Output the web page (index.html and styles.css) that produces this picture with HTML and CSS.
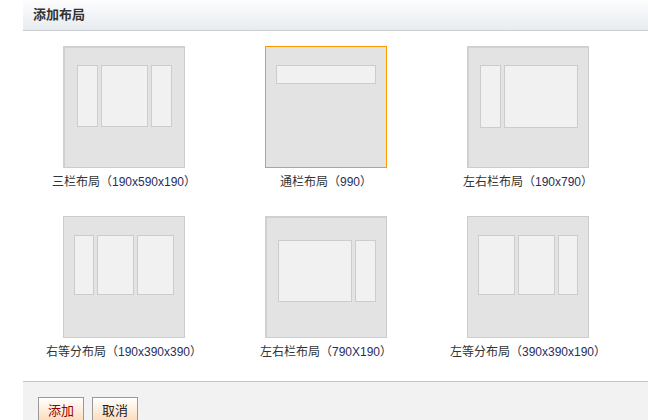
FILE: index.html
```html
<!DOCTYPE html>
<html lang="zh-CN">
<head>
<meta charset="utf-8">
<title>添加布局</title>
<link rel="stylesheet" href="styles.css">
</head>
<body>
<div class="dialog">
  <div class="dlg-head">添加布局</div>
  <div class="layouts">
    <div class="item">
      <div class="thumb thick pad-a">
        <div class="col w-s"></div><div class="col w-w"></div><div class="col w-s"></div>
      </div>
      <div class="label">三栏布局（<span class="num">190x590x190</span>）</div>
    </div>
    <div class="item">
      <div class="thumb selected pad-a">
        <div class="bar"></div>
      </div>
      <div class="label">通栏布局（<span class="num">990</span>）</div>
    </div>
    <div class="item">
      <div class="thumb thick pad-a">
        <div class="col w-s h-63"></div><div class="col w-l h-63"></div>
      </div>
      <div class="label">左右栏布局（<span class="num">190x790</span>）</div>
    </div>
    <div class="item">
      <div class="thumb pad-a">
        <div class="col w-n h-60"></div><div class="col w-m h-60"></div><div class="col w-m h-60"></div>
      </div>
      <div class="label">右等分布局（<span class="num">190x390x390</span>）</div>
    </div>
    <div class="item">
      <div class="thumb thick pad-b">
        <div class="col w-l"></div><div class="col w-s"></div>
      </div>
      <div class="label">左右栏布局（<span class="num">790X190</span>）</div>
    </div>
    <div class="item">
      <div class="thumb pad-a">
        <div class="col w-m h-60"></div><div class="col w-m h-60"></div><div class="col w-n h-60"></div>
      </div>
      <div class="label">左等分布局（<span class="num">390x390x190</span>）</div>
    </div>
  </div>
  <div class="dlg-foot">
    <button class="btn btn-primary">添加</button>
    <button class="btn">取消</button>
  </div>
</div>
</body>
</html>
```

FILE: styles.css
```css
html, body {
  margin: 0;
  padding: 0;
  background: #fff;
}
body {
  font-family: "Liberation Sans", "Noto Sans CJK SC", sans-serif;
  font-size: 12px;
  color: #333;
  overflow: hidden;
}
.dialog {
  margin-left: 23px;
}
.dlg-head {
  height: 30px;
  line-height: 30px;
  padding-left: 10px;
  font-size: 13px;
  font-weight: bold;
  color: #333;
  background: linear-gradient(#fdfdfe, #e8ecf0);
  border-bottom: 1px solid #c9cdd1;
}
.layouts {
  display: grid;
  grid-template-columns: repeat(3, 202px);
  grid-auto-rows: 144px;
  align-content: start;
  row-gap: 26px;
  padding-top: 15px;
  height: 335px;
}
.item {
  display: flex;
  flex-direction: column;
  align-items: center;
}
.thumb {
  box-sizing: border-box;
  width: 122px;
  height: 122px;
  background: #e3e3e3;
  border: 1px solid #cccccc;
  display: flex;
  justify-content: center;
  align-items: flex-start;
  gap: 3px;
}
.thumb.thick {
  border-top: 2px solid #d0d0d0;
  border-left: 2px solid #d0d0d0;
}
.thumb.selected {
  border: 1px solid #ff9900;
}
.pad-a { padding-top: 18px; }
.thumb.thick.pad-a { padding-top: 17px; }
.thumb.thick.pad-b { padding-top: 22px; }
.col {
  box-sizing: border-box;
  height: 62px;
  background: #f1f1f1;
  border: 1px solid #cccccc;
}
.h-63 { height: 63px; }
.h-60 { height: 60px; }
.w-s { width: 21px; }
.w-n { width: 20px; }
.w-m { width: 37px; }
.w-w { width: 47px; }
.w-l { width: 74px; }
.bar {
  box-sizing: border-box;
  width: 100px;
  height: 19px;
  background: #f1f1f1;
  border: 1px solid #cccccc;
}
.label {
  margin-top: 6px;
  height: 16px;
  line-height: 16px;
  color: #333;
  white-space: nowrap;
}
.num {
  color: #2a2d5c;
}
.dlg-foot {
  border-top: 1px solid #c4c4c4;
  background: #f2f2f2;
  height: 60px;
  padding: 15px 0 0 15px;
  display: flex;
  align-items: flex-start;
  gap: 8px;
}
.btn {
  box-sizing: border-box;
  width: 46px;
  height: 25px;
  margin: 0;
  padding: 0;
  font-family: "Liberation Sans", "Noto Sans CJK SC", sans-serif;
  font-size: 13px;
  color: #222;
  border: 1px solid #999;
  border-radius: 0;
  background: linear-gradient(#ffffff, #fcdcbc);
}
.btn-primary {
  color: #990000;
}
```
